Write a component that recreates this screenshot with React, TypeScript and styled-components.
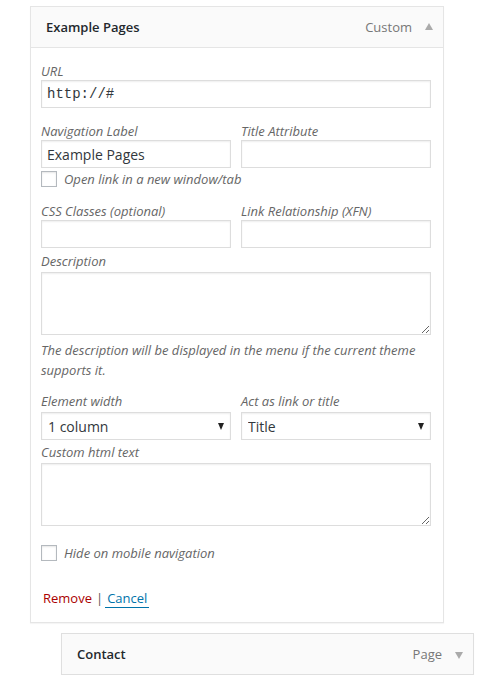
import styled, { createGlobalStyle } from 'styled-components'

const GlobalStyle = createGlobalStyle`
  html, body {
    margin: 0;
    padding: 0;
    background: #fff;
  }
  body {
    font-family: 'Open Sans', 'Liberation Sans', sans-serif;
    font-size: 13px;
    color: #444;
  }
  * {
    box-sizing: border-box;
  }
`

const Page = styled.div`
  padding: 6px 0 0 30px;
`

const MenuItem = styled.div<{ $indent?: number; $width: number; $top?: number }>`
  width: ${p => p.$width}px;
  margin-left: ${p => p.$indent || 0}px;
  margin-top: ${p => p.$top || 0}px;
`

const Handle = styled.div<{ $open?: boolean }>`
  display: flex;
  align-items: center;
  height: 42px;
  padding: 0 10px 0 15px;
  background: #fafafa;
  border: 1px solid ${p => (p.$open ? '#e5e5e5' : '#dfdfdf')};
  box-shadow: 0 1px 1px rgba(0, 0, 0, 0.04);
`

const ItemTitle = styled.span`
  flex: 1;
  font-weight: 600;
  font-size: 13px;
  line-height: 20px;
  color: #23282d;
`

const ItemType = styled.span`
  font-size: 13px;
  line-height: 20px;
  color: #777;
`

const Arrow = styled.span<{ $up?: boolean }>`
  width: 0;
  height: 0;
  margin-left: 13px;
  border-left: 4.5px solid transparent;
  border-right: 4.5px solid transparent;
  ${p =>
    p.$up
      ? 'border-bottom: 7px solid #aaa; margin-top: -1px;'
      : 'border-top: 7px solid #aaa; margin-top: 2px;'}
`

const Settings = styled.div`
  background: #fff;
  border: 1px solid #e5e5e5;
  border-top: none;
  padding: 15px 10px 14px 10px;
  box-shadow: 0 1px 1px rgba(0, 0, 0, 0.04);
`

const Row = styled.div<{ $top: number }>`
  display: flex;
  gap: 10px;
  margin-top: ${p => p.$top}px;
`

const Field = styled.div<{ $wide?: boolean }>`
  width: ${p => (p.$wide ? 390 : 190)}px;
`

const Label = styled.label`
  display: block;
  font-style: italic;
  font-size: 13px;
  line-height: 17px;
  color: #666;
`

const TextInput = styled.input<{ $mono?: boolean }>`
  display: block;
  width: 100%;
  height: 28px;
  margin: 0;
  padding: 3px 5px;
  border: 1px solid #ddd;
  box-shadow: inset 0 1px 2px rgba(0, 0, 0, 0.07);
  background: #fff;
  color: #32373c;
  font-family: ${p =>
    p.$mono ? "'Liberation Mono', 'DejaVu Sans Mono', monospace" : "'Open Sans', sans-serif"};
  font-size: 14px;
  outline: none;
`

const TextArea = styled.textarea`
  display: block;
  width: 100%;
  height: 63px;
  margin: 2px 0 0;
  padding: 2px 6px;
  border: 1px solid #ddd;
  box-shadow: inset 0 1px 2px rgba(0, 0, 0, 0.07);
  background: #fff;
  font-family: 'Open Sans', sans-serif;
  font-size: 14px;
  resize: vertical;
  outline: none;
`

const SelectWrap = styled.div`
  position: relative;
  margin-top: 2px;
`

const Select = styled.select`
  display: block;
  width: 100%;
  height: 28px;
  margin: 0;
  padding: 0 24px 0 6px;
  border: 1px solid #ddd;
  box-shadow: inset 0 1px 2px rgba(0, 0, 0, 0.07);
  background: #fff;
  color: #32373c;
  font-family: 'Open Sans', sans-serif;
  font-size: 14px;
  appearance: none;
  outline: none;
`

const Caret = styled.span`
  position: absolute;
  right: 7px;
  top: 11px;
  width: 0;
  height: 0;
  border-left: 3.5px solid transparent;
  border-right: 3.5px solid transparent;
  border-top: 7px solid #222;
  pointer-events: none;
`

const CheckRow = styled.label<{ $top: number }>`
  display: flex;
  align-items: center;
  gap: 7px;
  margin-top: ${p => p.$top}px;
  font-style: italic;
  font-size: 13px;
  line-height: 16px;
  color: #666;
`

const Checkbox = styled.input.attrs({ type: 'checkbox' })`
  appearance: none;
  width: 16px;
  height: 16px;
  margin: 0;
  border: 1px solid #b4b9be;
  background: #fff;
  box-shadow: inset 0 1px 2px rgba(0, 0, 0, 0.1);
  flex: none;
`

const Help = styled.p`
  margin: 5px 0 0;
  font-style: italic;
  font-size: 13px;
  line-height: 20px;
  color: #666;
`

const Actions = styled.div`
  margin-top: 27px;
  font-size: 13px;
  line-height: 20px;
  padding-left: 2px;
`

const RemoveLink = styled.a`
  color: #a00;
  text-decoration: none;
`

const Sep = styled.span`
  color: #555;
  margin: 0 2px 0 4px;
`

const CancelLink = styled.a`
  color: #0073aa;
  text-decoration: none;
  padding: 0 2px;
  border-bottom: 1px solid #0073aa;
`

export default function App() {
  return (
    <>
      <GlobalStyle />
      <Page>
        <MenuItem $width={414}>
          <Handle $open>
            <ItemTitle>Example Pages</ItemTitle>
            <ItemType>Custom</ItemType>
            <Arrow $up />
          </Handle>
          <Settings>
            <Row $top={0}>
              <Field $wide>
                <Label>URL</Label>
                <TextInput $mono defaultValue="http://#" />
              </Field>
            </Row>
            <Row $top={15}>
              <Field>
                <Label>Navigation Label</Label>
                <TextInput defaultValue="Example Pages" />
              </Field>
              <Field>
                <Label>Title Attribute</Label>
                <TextInput />
              </Field>
            </Row>
            <CheckRow $top={3}>
              <Checkbox />
              Open link in a new window/tab
            </CheckRow>
            <Row $top={16}>
              <Field>
                <Label>CSS Classes (optional)</Label>
                <TextInput />
              </Field>
              <Field>
                <Label>Link Relationship (XFN)</Label>
                <TextInput />
              </Field>
            </Row>
            <Row $top={5}>
              <Field $wide>
                <Label>Description</Label>
                <TextArea />
              </Field>
            </Row>
            <Help>The description will be displayed in the menu if the current theme supports it.</Help>
            <Row $top={13}>
              <Field>
                <Label>Element width</Label>
                <SelectWrap>
                  <Select defaultValue="1">
                    <option value="1">1 column</option>
                    <option value="2">2 columns</option>
                  </Select>
                  <Caret />
                </SelectWrap>
              </Field>
              <Field>
                <Label>Act as link or title</Label>
                <SelectWrap>
                  <Select defaultValue="title">
                    <option value="title">Title</option>
                    <option value="link">Link</option>
                  </Select>
                  <Caret />
                </SelectWrap>
              </Field>
            </Row>
            <Row $top={4}>
              <Field $wide>
                <Label>Custom html text</Label>
                <TextArea />
              </Field>
            </Row>
            <CheckRow $top={19}>
              <Checkbox />
              Hide on mobile navigation
            </CheckRow>
            <Actions>
              <RemoveLink href="#">Remove</RemoveLink>
              <Sep>|</Sep>
              <CancelLink href="#">Cancel</CancelLink>
            </Actions>
          </Settings>
        </MenuItem>
        <MenuItem $width={413} $indent={31} $top={10}>
          <Handle>
            <ItemTitle>Contact</ItemTitle>
            <ItemType>Page</ItemType>
            <Arrow />
          </Handle>
        </MenuItem>
      </Page>
    </>
  )
}
